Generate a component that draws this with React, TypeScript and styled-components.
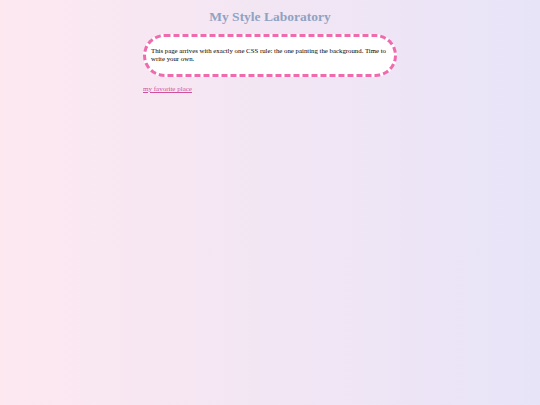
import React from "react";
import styled, { createGlobalStyle } from "styled-components";

const GlobalStyle = createGlobalStyle`
  html, body {
    margin: 0;
    padding: 0;
  }
  body {
    min-height: 100vh;
    background: linear-gradient(to right, #fde8f0, #e8e4f8);
    font-family: "Liberation Serif", "Times New Roman", serif;
  }
`;

const Page = styled.div`
  max-width: 254px;
  margin: 0 auto;
  padding-top: 9px;
`;

const Title = styled.h1`
  margin: 0 0 9px;
  text-align: center;
  font-size: 13.5px;
  line-height: 16px;
  font-weight: bold;
  color: #8fa2c2;
`;

const Note = styled.div`
  background: #ffffff;
  border: 3px dashed #f06aae;
  border-radius: 22px;
  padding: 10px 4px 11px 5px;
  font-size: 6.8px;
  line-height: 8px;
  color: #000;
`;

const FavLink = styled.a`
  display: inline-block;
  margin-top: 6px;
  font-size: 7px;
  color: #d0509a;
  text-decoration: underline;
`;

const App = () => {
  return (
    <>
      <GlobalStyle />
      <Page>
        <Title>My Style Laboratory</Title>
        <Note>
          This page arrives with exactly one CSS rule: the one painting the
          background. Time to write your own.
        </Note>
        <FavLink href="#">my favorite place</FavLink>
      </Page>
    </>
  );
};

export default App;
